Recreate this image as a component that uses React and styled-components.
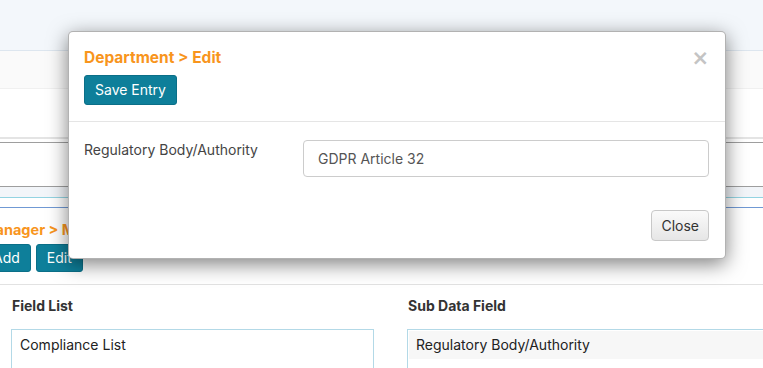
import React from "react";
import styled, { createGlobalStyle } from "styled-components";

const GlobalStyle = createGlobalStyle`
  html, body {
    margin: 0;
    padding: 0;
    background: #fff;
    font-family: "Inter", "Noto Sans", sans-serif;
    font-size: 14px;
    color: #333;
  }
  body {
    width: 763px;
    height: 368px;
    overflow: hidden;
    position: relative;
  }
  * { box-sizing: border-box; }
`;

const Page = styled.div`
  width: 763px;
  height: 368px;
  overflow: hidden;
`;

const TopBar = styled.div`
  height: 51px;
  background: #f3f7fb;
  border-bottom: 1px solid #dde6ef;
`;

const SubBar = styled.div`
  height: 38px;
  background: #fafafa;
  border-bottom: 1px solid #f0f0f0;
`;

const Spacer = styled.div`
  height: ${(p) => p.$h}px;
`;

const SearchArea = styled.div`
  border-top: 2px solid #e4e4e4;
  padding-top: 3px;
`;

const SearchBox = styled.div`
  height: 45px;
  border-top: 1px solid #9e9e9e;
  border-bottom: 1px solid #9e9e9e;
`;

const TabBand = styled.div`
  height: 11px;
  background: #f2f5f9;
  border-bottom: 1px solid #93d3e2;
`;

const TabLine = styled.div`
  height: 10px;
  border-bottom: 1px solid #7099d4;
`;

const Toolbar = styled.div`
  margin-left: -18px;
  padding: 12px 0 12px;
  border-bottom: 1px solid #e2e2e2;
`;

const Crumb = styled.div`
  color: #f8951d;
  font-weight: 700;
  font-size: 14.5px;
  line-height: 20px;
  white-space: nowrap;
  padding-left: 0;
`;

const ButtonRow = styled.div`
  display: flex;
  gap: 5px;
  margin-top: 4px;
`;

const PrimaryButton = styled.button`
  font-family: inherit;
  font-size: 14px;
  color: #fff;
  background: #0e7f9a;
  border: 1px solid #0b6f88;
  border-radius: 3px;
  height: ${(p) => p.$h || 28}px;
  padding: 0 10px;
  line-height: 1;
  cursor: pointer;
`;

const Columns = styled.div`
  display: grid;
  grid-template-columns: 363px 363px;
  column-gap: 33px;
  padding: 11px 0 0 11px;
`;

const Column = styled.div`
  display: flex;
  flex-direction: column;
  gap: 13px;
`;

const ColTitle = styled.div`
  font-weight: 700;
  font-size: 14px;
  line-height: 20px;
  color: #333;
  padding-left: 1px;
`;

const ListBox = styled.div`
  border: 1px solid #b3d9e7;
  padding: 1px;
  height: 60px;
`;

const ListItem = styled.div`
  font-size: 14px;
  line-height: 20px;
  padding: 4px 7px;
  color: #222;
  background: ${(p) => (p.$selected ? "#f7f7f7" : "transparent")};
  height: 28px;
`;

const Modal = styled.div`
  position: absolute;
  left: 68px;
  top: 31px;
  width: 658px;
  background: #fff;
  border: 1px solid rgba(0, 0, 0, 0.3);
  border-radius: 5px;
  box-shadow: 0 5px 20px rgba(0, 0, 0, 0.5);
`;

const ModalHeader = styled.div`
  padding: 16px 16px 16px 15px;
  border-bottom: 1px solid #e5e5e5;
`;

const TitleRow = styled.div`
  display: flex;
  align-items: center;
  justify-content: space-between;
  margin-bottom: 7px;
`;

const ModalTitle = styled.div`
  color: #f8951d;
  font-weight: 700;
  font-size: 15.5px;
  line-height: 20px;
`;

const CloseX = styled.span`
  color: #c4c4c4;
  font-size: 21px;
  font-weight: 700;
  line-height: 20px;
  font-family: "DejaVu Sans", sans-serif;
`;

const ModalBody = styled.div`
  display: grid;
  grid-template-columns: 219px 1fr;
  padding: 18px 16px 16px 15px;
`;

const Label = styled.div`
  font-size: 14px;
  line-height: 20px;
  color: #444;
`;

const TextInput = styled.input`
  font-family: inherit;
  font-size: 14px;
  color: #555;
  height: 37px;
  padding: 0 14px;
  border: 1px solid #ccc;
  border-radius: 4px;
  outline: none;
  width: 100%;
  margin: 0;
`;

const ModalFooter = styled.div`
  display: flex;
  justify-content: flex-end;
  padding: 17px 16px 17px;
`;

const DefaultButton = styled.button`
  font-family: inherit;
  font-size: 14px;
  color: #333;
  height: 31px;
  padding: 0 9px;
  border: 1px solid #c8c8c8;
  border-radius: 4px;
  background: linear-gradient(#fafafa, #e6e6e6);
  cursor: pointer;
`;

export default function App() {
  return (
    <>
      <GlobalStyle />
      <Page>
        <TopBar />
        <SubBar />
        <Spacer $h={48} />
        <SearchArea>
          <SearchBox />
        </SearchArea>
        <TabBand />
        <TabLine />
        <Toolbar>
          <Crumb>Manager &gt; Master Data</Crumb>
          <ButtonRow>
            <PrimaryButton>Add</PrimaryButton>
            <PrimaryButton>Edit</PrimaryButton>
          </ButtonRow>
        </Toolbar>
        <Columns>
          <Column>
            <ColTitle>Field List</ColTitle>
            <ListBox>
              <ListItem>Compliance List</ListItem>
            </ListBox>
          </Column>
          <Column>
            <ColTitle>Sub Data Field</ColTitle>
            <ListBox>
              <ListItem $selected>Regulatory Body/Authority</ListItem>
            </ListBox>
          </Column>
        </Columns>
      </Page>
      <Modal>
        <ModalHeader>
          <TitleRow>
            <ModalTitle>Department &gt; Edit</ModalTitle>
            <CloseX>×</CloseX>
          </TitleRow>
          <PrimaryButton $h={30}>Save Entry</PrimaryButton>
        </ModalHeader>
        <ModalBody>
          <Label>Regulatory Body/Authority</Label>
          <TextInput defaultValue="GDPR Article 32" />
        </ModalBody>
        <ModalFooter>
          <DefaultButton>Close</DefaultButton>
        </ModalFooter>
      </Modal>
    </>
  );
}
